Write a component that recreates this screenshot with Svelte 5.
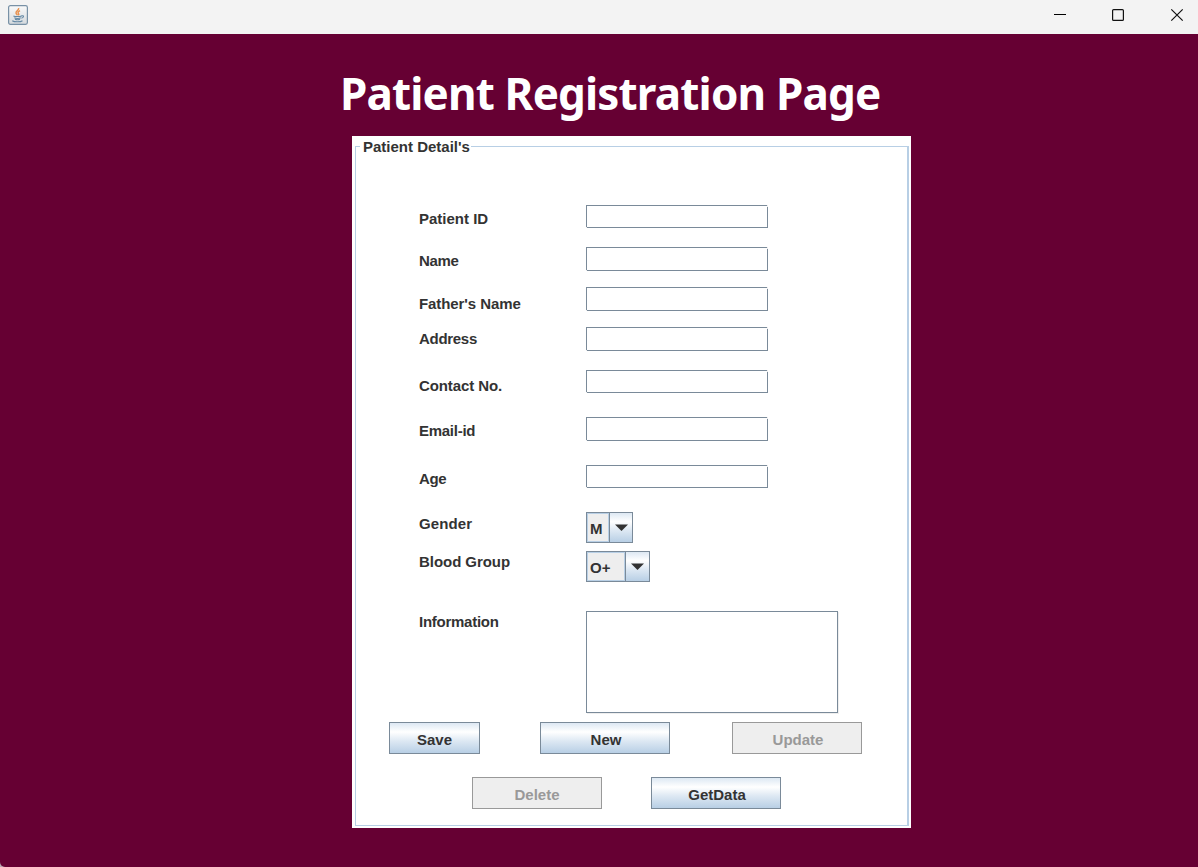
<script>
  const fields = [
    { label: 'Patient ID', height: 42, drop: 5, box: 23, spacing: 0 },
    { label: 'Name', height: 40, drop: 5, box: 24, spacing: -0.3 },
    { label: "Father's Name", height: 40, drop: 8, box: 24, spacing: -0.08 },
    { label: 'Address', height: 43, drop: 3, box: 24, spacing: -0.3 },
    { label: 'Contact No.', height: 47, drop: 7, box: 23, spacing: -0.1 },
    { label: 'Email-id', height: 48, drop: 5, box: 24, spacing: -0.27 },
    { label: 'Age', height: 47, drop: 5, box: 23, spacing: -0.4 },
    { label: 'Gender', height: 39, drop: 3, spacing: 0.1, value: 'M', width: 47, arrow: 23 },
    { label: 'Blood Group', height: 60, drop: 2, spacing: -0.05, value: 'O+', width: 64, arrow: 24 },
    { label: 'Information', height: 111, drop: 2, spacing: -0.26, area: true },
  ];
</script>

<div class="window">
  <header>
    <svg class="java" width="20" height="20" viewBox="0 0 20 20">
      <defs><linearGradient id="tile" x1="0" y1="0" x2="0" y2="1"><stop offset="0" stop-color="#fafafa" /><stop offset="1" stop-color="#d4d9dd" /></linearGradient></defs>
      <rect x=".6" y=".6" width="18.8" height="18.8" rx="1.8" fill="url(#tile)" stroke="#7891a6" stroke-width="1.2" />
      <path d="M10.6 3c1 2-3.4 3-2.5 5.2.3.9 1 1.3 1.3 2M12 5.6c-2.5 1.3-2.3 2.1-1.3 3.3.4.6 0 1-.4 1.4" fill="none" stroke="#e8914e" stroke-width="1.5" />
      <path d="M5.4 10.9c1.5.8 6.5.8 8.2 0M6.3 12.7c1.5.7 5 .7 6.5 0M7 14.2c1.4.5 3.8.5 5 0M13.5 10.9c2.8-.8 2.6 1.6-.1 2.3M4.3 15.7c2 1.5 8.2 1.4 10.2 0" fill="none" stroke="#6488a4" stroke-width="1.1" />
    </svg>
    <svg class="controls" width="132" height="20" viewBox="0 0 132 20">
      <path d="M4 9.5h12" stroke="#000" />
      <rect x="62.6" y="4.6" width="10.8" height="10.8" rx="1" fill="none" stroke="#111" stroke-width="1.2" />
      <path d="M121.3 4.3l11.4 11.4M132.7 4.3l-11.4 11.4" stroke="#111" stroke-width="1.2" />
    </svg>
  </header>
  <main>
    <h1>Patient Registration Page</h1>
    <section class="panel">
      <fieldset>
        <legend>Patient Detail's</legend>
        <div class="form">
          {#each fields as f}
            <div class="row" style:height="{f.height}px">
              <span class="label" style:padding-top="{f.drop}px" style:letter-spacing="{f.spacing}px">{f.label}</span>
              {#if f.value}
                <div class="combo" style:width="{f.width}px">
                  <span class="value">{f.value}</span>
                  <span class="arrow" style:width="{f.arrow}px"><svg width="13" height="7" viewBox="0 0 13 7"><path d="M0 .5h13L6.5 7z" fill="#333" /></svg></span>
                </div>
              {:else if f.area}
                <div class="area"></div>
              {:else}
                <div class="input" style:height="{f.box}px"></div>
              {/if}
            </div>
          {/each}
        </div>
        <div class="buttons first">
          <button class="save">Save</button>
          <button class="nudge">New</button>
          <button class="nudge" disabled>Update</button>
        </div>
        <div class="buttons second">
          <button disabled>Delete</button>
          <button class="nudge">GetData</button>
        </div>
      </fieldset>
    </section>
  </main>
</div>

<style>
  :global(body) { margin: 0; background: #b9a9b2; }
  .window { width: 1198px; height: 867px; overflow: hidden; border-bottom-left-radius: 5px; background: #660033; font: bold 15px/18px "Liberation Sans", Arial, sans-serif; color: #333; }
  header { height: 34px; box-sizing: border-box; background: #f3f3f3; display: flex; justify-content: space-between; padding: 5px 16px 0 8px; }
  header svg { display: block; overflow: visible; }
  h1 { margin: 0 0 0 340px; height: 102px; padding-top: 29px; box-sizing: border-box; font: bold 44px/60px "Noto Sans", "Open Sans", sans-serif; letter-spacing: -0.84px; color: #fff; white-space: nowrap; }
  .panel { width: 559px; height: 692px; margin-left: 352px; box-sizing: border-box; padding: 2px 2px 2px 3px; background: #fff; }
  fieldset { margin: 0; padding: 0; min-width: 0; height: 688px; box-sizing: border-box; border: 1px solid #b8cfe5; border-right-width: 2px; }
  legend { margin-left: 4px; padding: 0 1px 0 3px; height: 17px; line-height: 18px; }
  .form { padding: 50px 0 0 63px; }
  .row { display: flex; align-items: flex-start; }
  .label { width: 167px; white-space: nowrap; }
  .input, .area, .combo, button { box-sizing: border-box; border: 1px solid #7a8a99; }
  .input { width: 182px; position: relative; }
  .input::before, .input::after { content: ""; position: absolute; width: 1px; height: 1px; background: #eee; }
  .input::before { top: -1px; right: -1px; height: 2px; }
  .input::after { bottom: -1px; left: -1px; }
  .area { width: 252px; height: 102px; box-shadow: 1px 1px 0 #eee; }
  .combo { height: 31px; display: flex; background: #eee; }
  .value { flex: 1; box-sizing: border-box; border: 1px solid #b8cfe5; padding: 6px 0 0 2px; line-height: 17px; }
  .arrow { box-sizing: border-box; border-left: 1px solid #7a8a99; display: flex; justify-content: center; padding-top: 11px; background: linear-gradient(#dde8f3, #fff 30%, #dde8f3 60%, #b8cfe5); }
  .arrow svg { flex: none; }
  .buttons { display: flex; }
  .first { padding-left: 33px; gap: 60px; }
  .second { padding: 23px 0 0 116px; gap: 49px; }
  button { width: 130px; height: 32px; margin: 0; padding: 3px 0 0; border-radius: 0; font: inherit; color: #333; background: linear-gradient(#dde8f3, #fff 30%, #dde8f3 60%, #b8cfe5); }
  .nudge { padding-left: 2px; }
  .save { width: 91px; }
  button:disabled { color: #999; background: #eee; border-color: #999; }
  .first button:last-child { margin-left: 2px; }
</style>
